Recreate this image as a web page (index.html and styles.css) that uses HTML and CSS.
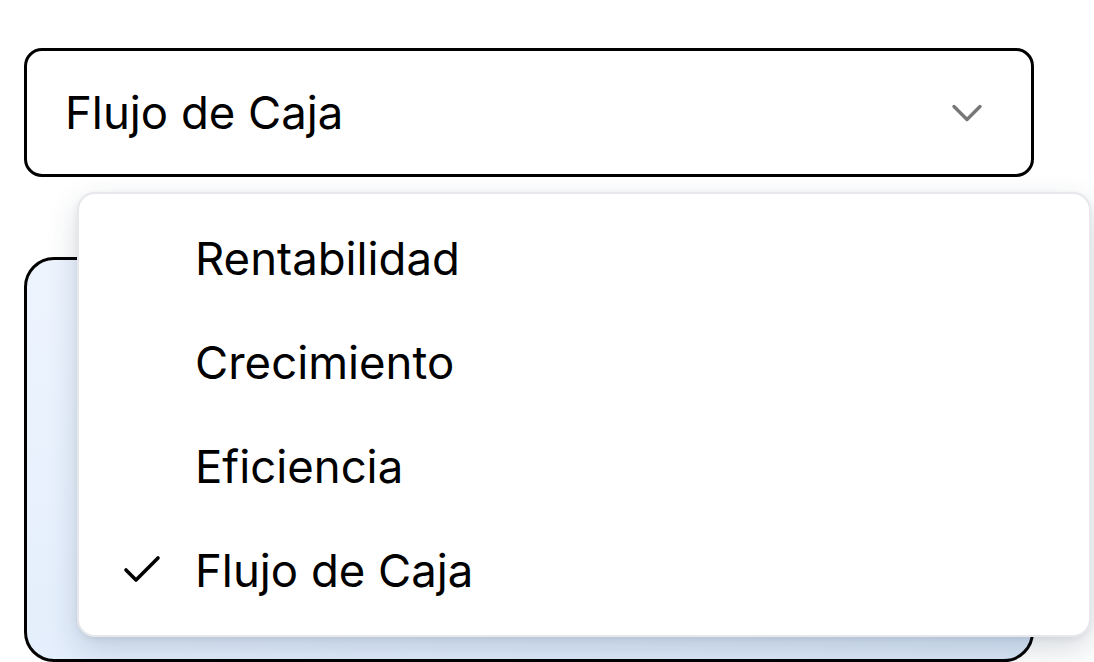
FILE: index.html
```html
<!DOCTYPE html>
<html lang="es">
<head>
<meta charset="utf-8">
<title>Select</title>
<link rel="stylesheet" href="styles.css">
</head>
<body>
<div class="page">
  <div class="select">
    <button class="trigger" type="button">
      <span class="value">Flujo de Caja</span>
      <svg class="chevron" width="32" height="20" viewBox="0 0 32 20" fill="none">
        <path d="M3 3.5 L16 16.5 L29 3.5" stroke="#777" stroke-width="3.4" stroke-linecap="round" stroke-linejoin="round"/>
      </svg>
    </button>
    <ul class="menu">
      <li class="item"><span class="check"></span><span>Rentabilidad</span></li>
      <li class="item"><span class="check"></span><span>Crecimiento</span></li>
      <li class="item"><span class="check"></span><span>Eficiencia</span></li>
      <li class="item selected"><span class="check"><svg width="38" height="30" viewBox="0 0 38 30" fill="none"><path d="M3 15 L13 25 L35 3" stroke="#000" stroke-width="3.6" stroke-linecap="round" stroke-linejoin="round"/></svg></span><span>Flujo de Caja</span></li>
    </ul>
  </div>
  <div class="card"></div>
</div>
</body>
</html>
```

FILE: styles.css
```css
* { box-sizing: border-box; }
html, body {
  margin: 0;
  padding: 0;
  background: #ffffff;
  font-family: Inter, "Noto Sans", sans-serif;
  color: #000;
  overflow: hidden;
}
.page {
  padding: 48px 0 0 24px;
  width: 1094px;
  height: 662px;
}
.select {
  position: relative;
  width: 1010px;
}
.trigger {
  display: flex;
  align-items: center;
  justify-content: space-between;
  width: 1010px;
  height: 129px;
  padding: 0 48px 0 38px;
  border: 3px solid #000;
  border-radius: 18px;
  background: #fff;
  font-family: inherit;
  font-size: 45.5px;
  color: #000;
}
.value { line-height: 1; }
.chevron { display: block; }
.menu {
  position: absolute;
  top: 144px;
  left: 53px;
  width: 1014px;
  height: 445px;
  margin: 0;
  padding: 12px 0;
  list-style: none;
  background: #fff;
  border: 2px solid #e6e8ec;
  border-radius: 18px;
  box-shadow: 0 12px 30px rgba(30, 50, 80, 0.18), 0 2px 6px rgba(0,0,0,0.06);
  z-index: 2;
}
.item {
  display: flex;
  align-items: center;
  height: 104px;
  font-size: 45.5px;
}
.check {
  width: 116px;
  padding-left: 44px;
  display: flex;
  align-items: center;
}
.check svg { display: block; }
.card {
  margin-top: 80px;
  width: 1010px;
  height: 405px;
  border: 3px solid #000;
  border-radius: 30px;
  background: linear-gradient(160deg, #edf4fe 0%, #e3eefc 60%, #d9e6f8 100%);
}
```
